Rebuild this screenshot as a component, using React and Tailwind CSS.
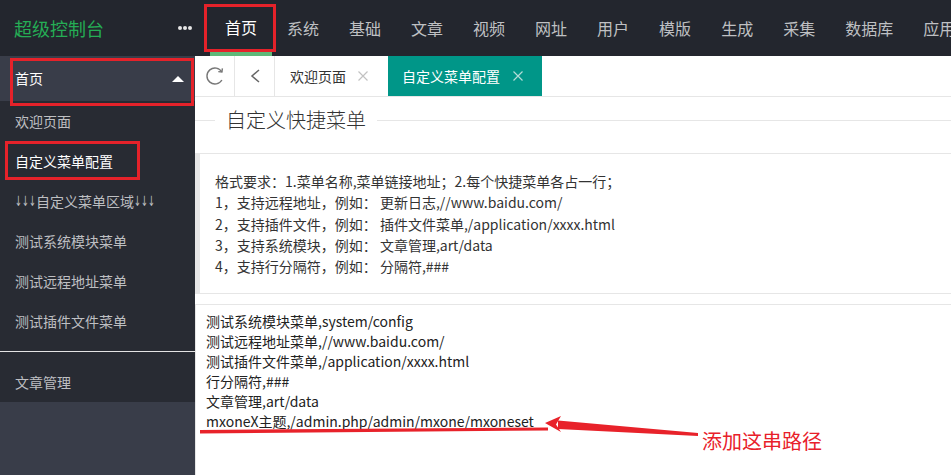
import React from "react";

const navItems = ["首页", "系统", "基础", "文章", "视频", "网址", "用户", "模版", "生成", "采集", "数据库", "应用"];

const sideItems = ["欢迎页面", "自定义菜单配置", "ARROWS", "测试系统模块菜单", "测试远程地址菜单", "测试插件文件菜单"];

const quoteLines = [
  "格式要求：1.菜单名称,菜单链接地址；2.每个快捷菜单各占一行；",
  "1，支持远程地址，例如： 更新日志,//www.baidu.com/",
  "2，支持插件文件，例如： 插件文件菜单,/application/xxxx.html",
  "3，支持系统模块，例如： 文章管理,art/data",
  "4，支持行分隔符，例如： 分隔符,###",
];

const areaLines = [
  "测试系统模块菜单,system/config",
  "测试远程地址菜单,//www.baidu.com/",
  "测试插件文件菜单,/application/xxxx.html",
  "行分隔符,###",
  "文章管理,art/data",
  "mxoneX主题,/admin.php/admin/mxone/mxoneset",
];

function CloseIcon({ color }) {
  return (
    <svg width="10" height="10" viewBox="0 0 10 10">
      <path d="M0.5 0.5 L9.5 9.5 M9.5 0.5 L0.5 9.5" stroke={color} strokeWidth="1.2" fill="none" />
    </svg>
  );
}

function Arrow() {
  return (
    <span className="inline-block w-[7px] overflow-visible">
      <span className="inline-block origin-left scale-x-[0.6] font-['DejaVu_Sans',sans-serif] text-[14px]">↓</span>
    </span>
  );
}

function Arrows() {
  return (
    <span className="inline-flex">
      <Arrow />
      <Arrow />
      <Arrow />
    </span>
  );
}

export default function App() {
  return (
    <div className="relative w-[951px] h-[475px] overflow-hidden flex flex-col bg-white font-['Noto_Sans_CJK_SC',sans-serif]">
      {/* top bar */}
      <div className="h-[56px] shrink-0 bg-[#23262e] flex items-stretch">
        <div className="w-[165px] shrink-0 flex items-center pl-[14px] text-[18px] text-[#25ad55]">超级控制台</div>
        <div className="w-[45px] shrink-0 flex items-center gap-[1px] pl-[13px]">
          <span className="w-[4px] h-[4px] rounded-full bg-[#e6e6e6]"></span>
          <span className="w-[4px] h-[4px] rounded-full bg-[#e6e6e6]"></span>
          <span className="w-[4px] h-[4px] rounded-full bg-[#e6e6e6]"></span>
        </div>
        <div className="flex-1 min-w-0 flex items-stretch whitespace-nowrap overflow-hidden">
          {navItems.map((n, i) =>
            i === 0 ? (
              <div key={n} className="shrink-0 px-[15px] flex items-center pt-[2px] text-[16px] text-white border-b-[4px] border-[#5fb878]">
                {n}
              </div>
            ) : (
              <div key={n} className="shrink-0 px-[15px] flex items-center text-[16px] text-[#bfc0c3]">
                {n}
              </div>
            )
          )}
        </div>
      </div>

      <div className="flex flex-1 min-h-0">
        {/* sidebar */}
        <div className="w-[195px] shrink-0 bg-[#393d49] flex flex-col">
          <div className="h-[45px] flex items-center justify-between pl-[15px] pr-[11px] text-[14px] text-white">
            <span>首页</span>
            <svg width="12" height="6" viewBox="0 0 12 6">
              <path d="M0 6 L6 0 L12 6 Z" fill="#ffffff" />
            </svg>
          </div>
          <div className="bg-[#282b33] pb-[10px]">
            {sideItems.map((s, i) => (
              <div
                key={s}
                className={
                  "h-[40px] flex items-center pl-[15px] text-[14px] whitespace-nowrap " +
                  (i === 1 ? "text-white" : "text-[#bebfc2]")
                }
              >
                {s === "ARROWS" ? (
                  <>
                    <Arrows />
                    <span>自定义菜单区域</span>
                    <Arrows />
                  </>
                ) : (
                  s
                )}
              </div>
            ))}
          </div>
          <div className="h-px bg-[#e4e4e4]"></div>
          <div className="h-[50px] bg-[#282b33] pt-[10px] pl-[15px] leading-[40px] text-[14px] text-[#bebfc2]">文章管理</div>
        </div>

        {/* main */}
        <div className="flex-1 flex flex-col min-w-0">
          <div className="h-[41px] shrink-0 flex border-b border-[#e6e6e6]">
            <div className="w-[40px] flex items-center justify-center border-r border-[#e6e6e6]">
              <svg width="20" height="20" viewBox="0 0 20 20">
                <path d="M16.9 14 A8 8 0 1 1 16.9 6" stroke="#777" strokeWidth="1.4" fill="none" />
                <path d="M17.4 2.4 L16.9 6 L13.3 5.6" stroke="#777" strokeWidth="1.4" fill="none" />
              </svg>
            </div>
            <div className="w-[40px] flex items-center justify-center border-r border-[#e6e6e6]">
              <svg width="12" height="14" viewBox="0 0 12 14">
                <path d="M10 1 L3 7 L10 13" stroke="#666" strokeWidth="1.5" fill="none" />
              </svg>
            </div>
            <div className="flex items-center pl-[15px] pr-[20px] gap-[12px] text-[14px] text-[#333]">
              <span>欢迎页面</span>
              <CloseIcon color="#c2c2c2" />
            </div>
            <div className="flex items-center pl-[14px] pr-[19px] gap-[13px] text-[14px] text-white bg-[#009688]">
              <span>自定义菜单配置</span>
              <CloseIcon color="#b3dcd7" />
            </div>
          </div>

          <div className="mt-[12px] h-[22px] flex items-center">
            <div className="w-[20px] h-px bg-[#e6e6e6]"></div>
            <span className="px-[11px] text-[20px] leading-[22px] font-light text-[#333]">自定义快捷菜单</span>
            <div className="flex-1 h-px bg-[#e6e6e6]"></div>
          </div>

          <div className="mt-[22px] border border-[#e6e6e6] border-l-[5px] border-r-0 pl-[15px] pt-[17px] pb-[16px] text-[14px] leading-[21.25px] text-[#333]">
            {quoteLines.map((l) => (
              <div key={l}>{l}</div>
            ))}
          </div>

          <div className="mt-[10px] h-[200px] shrink-0 border-t border-l border-[#e6e6e6] pl-[10px] pt-[6px] text-[14px] leading-[20px] text-[#222]">
            {areaLines.map((l) => (
              <div key={l}>{l}</div>
            ))}
          </div>
        </div>
      </div>

      {/* annotations */}
      <div className="absolute left-[204px] top-[4px] w-[72px] h-[48px] border-[3px] border-[#e5222a]"></div>
      <div className="absolute left-[10px] top-[58px] w-[184px] h-[48px] border-[3px] border-[#e5222a]"></div>
      <div className="absolute left-[5px] top-[141px] w-[135px] h-[39px] border-[3px] border-[#e5222a]"></div>
      <svg className="absolute left-0 top-0 pointer-events-none" width="951" height="475" viewBox="0 0 951 475">
        <polygon points="200,430 548,427.5 548,430.5 200,433.5" fill="#e8222a" />
        <polygon points="558,420.5 698,433 698,436 558,429" fill="#e8222a" />
        <polygon points="545,423 561,416 556,424.5 561,432" fill="#e8222a" />
      </svg>
      <div className="absolute left-[702px] top-[429px] text-[20px] leading-[24px] text-[#e8202a]">添加这串路径</div>
    </div>
  );
}
